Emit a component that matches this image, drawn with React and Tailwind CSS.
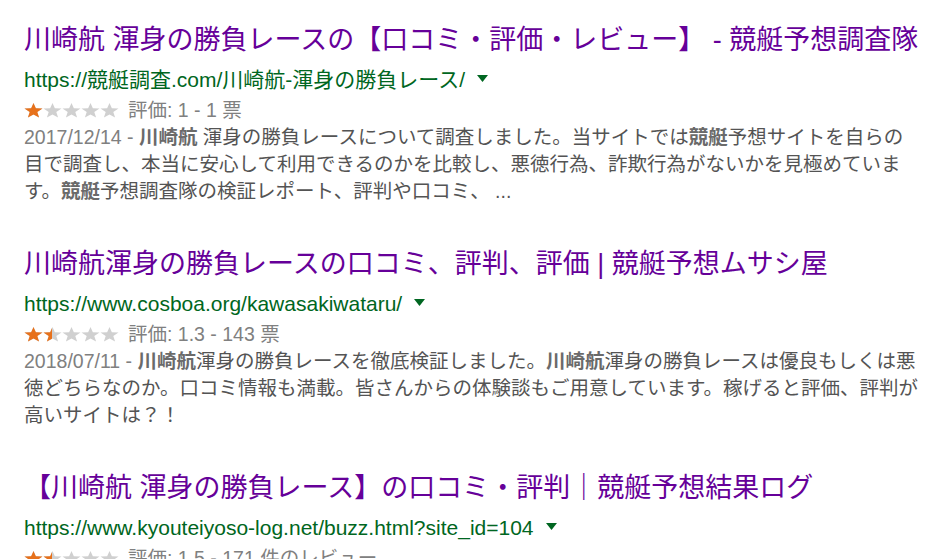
import React from "react";

const STAR =
  "M9.5 1.93L11.85 7.25L18.53 7.5L13.3 11.05L15.09 16.53L9.5 13.4L3.91 16.53L5.7 11.05L0.47 7.5L7.15 7.25Z";

function StarRow({ fillClass }) {
  return (
    <span className="flex w-[95px] shrink-0">
      {[0, 1, 2, 3, 4].map((i) => (
        <svg key={i} width="19" height="19" viewBox="0 0 19 19" className="block h-[19px] w-[19px] shrink-0">
          <path d={STAR} className={fillClass} />
        </svg>
      ))}
    </span>
  );
}

function Stars({ width }) {
  return (
    <span className="relative flex h-[27px] w-[95px] shrink-0 items-center">
      <StarRow fillClass="fill-[#d0d0d0]" />
      <span
        className="absolute left-0 top-0 flex h-[27px] items-center overflow-hidden"
        style={{ width }}
      >
        <StarRow fillClass="fill-[#e7711b]" />
      </span>
    </span>
  );
}

function Arrow() {
  return (
    <svg width="11" height="7" viewBox="0 0 11 7" className="ml-[12px] shrink-0 -mt-[3px]">
      <path d="M0 0h11L5.5 7z" className="fill-[#006621]" />
    </svg>
  );
}

const B = ({ children }) => <b className="font-bold text-[#6a6a6a]">{children}</b>;

function Result({ title, url, stars, rating, children, last }) {
  return (
    <div className={last ? "" : "mb-[41px]"}>
      <h3 className="whitespace-nowrap text-[27px] leading-[36px] font-normal text-[#660099]">
        {title}
      </h3>
      <div className="mt-[7px] flex h-[30px] items-center whitespace-nowrap text-[21px] leading-[30px] text-[#006621]">
        <span>{url}</span>
        <Arrow />
      </div>
      <div className="mt-[2px] flex h-[27px] items-center whitespace-nowrap text-[19.5px] leading-[27px] text-[#808080]">
        <Stars width={stars} />
        <span className="ml-[9px]">{rating}</span>
      </div>
      {children && (
        <div className="text-[19.5px] leading-[27px] text-[#545454]">{children}</div>
      )}
    </div>
  );
}

export default function App() {
  return (
    <div className="h-[559px] w-[943px] overflow-hidden bg-white pl-[24px] pt-[22px] font-['Liberation_Sans','Noto_Sans_CJK_JP',sans-serif] [text-autospace:no-autospace]">
      <div className="w-[898px]">
        <Result
          title="川崎航 渾身の勝負レースの【口コミ・評価・レビュー】 - 競艇予想調査隊"
          url="https://競艇調査.com/川崎航-渾身の勝負レース/"
          stars="19px"
          rating="評価: 1 - 1 票"
        >
          <span className="text-[#808080]">2017/12/14 - </span>
          <B>川崎航</B> 渾身の勝負レースについて調査しました。当サイトでは<B>競艇</B>
          予想サイトを自らの目で調査し、本当に安心して利用できるのかを比較し、悪徳行為、詐欺行為がないかを見極めています。
          <B>競艇</B>予想調査隊の検証レポート、評判や口コミ、 ...
        </Result>
        <Result
          title="川崎航渾身の勝負レースの口コミ、評判、評価 | 競艇予想ムサシ屋"
          url="https://www.cosboa.org/kawasakiwataru/"
          stars="28px"
          rating="評価: 1.3 - 143 票"
        >
          <span className="text-[#808080]">2018/07/11 - </span>
          <B>川崎航</B>渾身の勝負レースを徹底検証しました。<B>川崎航</B>
          渾身の勝負レースは優良もしくは悪徳どちらなのか。口コミ情報も満載。皆さんからの体験談もご用意しています。稼げると評価、評判が高いサイトは？！
        </Result>
        <Result
          title="【川崎航 渾身の勝負レース】の口コミ・評判｜競艇予想結果ログ"
          url="https://www.kyouteiyoso-log.net/buzz.html?site_id=104"
          stars="28px"
          rating="評価: 1.5 - 171 件のレビュー"
          last
        />
      </div>
    </div>
  );
}
